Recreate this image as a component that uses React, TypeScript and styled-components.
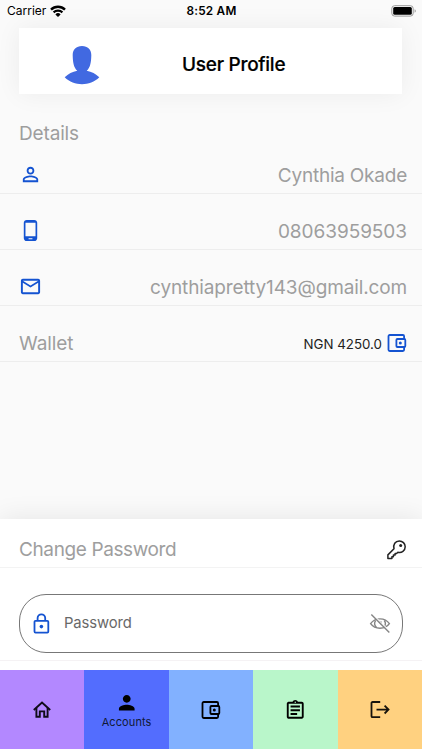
import React from "react";
import styled, { createGlobalStyle } from "styled-components";
import {
  MdPersonOutline,
  MdPhoneAndroid,
  MdMailOutline,
  MdOutlineAssignment,
  MdPerson,
} from "react-icons/md";

const GlobalStyle = createGlobalStyle`
  * { box-sizing: border-box; }
  body { margin: 0; background: #fafafa; }
  svg { display: block; flex: none; }
`;

const Screen = styled.div`
  width: 422px;
  height: 750px;
  display: flex;
  flex-direction: column;
  overflow: hidden;
  background: #fafafa;
  font-family: Inter, "Liberation Sans", sans-serif;
  color: #000;
`;

const StatusBar = styled.header`
  display: grid;
  grid-template-columns: 1fr auto 1fr;
  align-items: center;
  height: 28px;
  flex: none;
  padding: 0 6px 6px 7px;
  font-size: 12px;
  line-height: 16px;
`;

const Carrier = styled.div`
  display: flex;
  align-items: center;
  gap: 4px;
  letter-spacing: 0;
`;

const Clock = styled.div`
  font-weight: 600;
  font-size: 11.8px;
  letter-spacing: 0.22px;
`;

const Battery = styled.div`
  justify-self: end;
`;

const ProfileCard = styled.section`
  display: grid;
  grid-template-columns: 125px 1fr;
  align-items: center;
  width: 383px;
  height: 66px;
  flex: none;
  margin-left: 19px;
  background: #fff;
  box-shadow: 0 0 26px rgba(0, 0, 0, 0.06);
`;

const Avatar = styled.div`
  display: flex;
  justify-content: center;
  padding-top: 8px;
`;

const Title = styled.h1`
  margin: 7px 0 0 38px;
  font-size: 19px;
  line-height: 24px;
  font-weight: 500;
  letter-spacing: -0.27px;
  -webkit-text-stroke: 0.2px #000;
`;

const Label = styled.span<{ $track: number }>`
  font-size: 19px;
  line-height: 24px;
  letter-spacing: ${(p) => p.$track}px;
  color: #9e9e9e;
  white-space: nowrap;
`;

const SectionTitle = styled.div`
  height: 62px;
  flex: none;
  padding: 28px 0 0 19px;
`;

const Row = styled.div<{ $height: number }>`
  display: flex;
  align-items: flex-end;
  justify-content: space-between;
  flex: none;
  height: ${(p) => p.$height}px;
  padding: 0 15px 5px 19px;
  border-bottom: 1px solid #ededed;
`;

const BlueIcon = styled.span`
  display: flex;
  align-items: center;
  height: 24px;
  padding-bottom: 3px;
  color: #1453d1;
`;

const Balance = styled.div`
  display: flex;
  align-items: center;
  gap: 4px;
  height: 24px;
  margin-right: -1px;
  font-size: 13.3px;
  letter-spacing: 0;
  color: #222;
`;

const Amount = styled.span`
  padding-bottom: 1px;
`;

const Panel = styled.section`
  margin-top: auto;
  flex: none;
  height: 151px;
  background: #fff;
  box-shadow: 0 0 26px rgba(0, 0, 0, 0.09);
`;

const PanelHeader = styled.div`
  display: flex;
  align-items: center;
  justify-content: space-between;
  height: 49px;
  padding: 13px 15px 0 19px;
  border-bottom: 1px solid #f3f3f3;
`;

const PasswordArea = styled.div`
  height: 93px;
  padding: 26px 19px 0;
  border-bottom: 1px solid #f5f2f4;
`;

const PasswordField = styled.div`
  display: flex;
  align-items: center;
  height: 59px;
  padding: 0 11px 0 12px;
  border: 1px solid #777;
  border-radius: 27px;
`;

const Placeholder = styled.span`
  flex: 1;
  margin-left: 12px;
  padding-bottom: 2px;
  font-size: 14.8px;
  letter-spacing: -0.1px;
  color: #686868;
`;

const TabBar = styled.nav`
  display: grid;
  grid-template-columns: repeat(5, 1fr);
  flex: none;
  height: 80px;
  padding-bottom: 1px;
  background: #fff;
`;

const Tab = styled.div<{ $color: string }>`
  display: flex;
  flex-direction: column;
  align-items: center;
  justify-content: center;
  padding-top: 1px;
  background: ${(p) => p.$color};
`;

const TabLabel = styled.span`
  font-size: 11px;
  line-height: 14px;
  letter-spacing: 0.1px;
  color: #101936;
`;

const WifiIcon = () => (
  <svg width="16" height="13" viewBox="0 0 16 13">
    <path d="M1 4.6a10 10 0 0 1 14 0" fill="none" stroke="#000" strokeWidth="2.4" />
    <path d="M3.6 7.4a6.3 6.3 0 0 1 8.8 0" fill="none" stroke="#000" strokeWidth="2.2" />
    <path d="M8 12 5.4 9.4a3.7 3.7 0 0 1 5.2 0Z" />
  </svg>
);

const BatteryIcon = () => (
  <svg width="26" height="12" viewBox="0 0 26 12">
    <rect x="1.8" y="0.7" width="21.4" height="10.4" rx="2.8" fill="none" stroke="#999" strokeWidth="1" />
    <rect x="3.2" y="2.1" width="18.6" height="7.6" rx="1.5" />
    <path d="M24.6 4.3v3.4q1.2-.5 1.2-1.7t-1.2-1.7Z" fill="#999" />
  </svg>
);

const AvatarIcon = () => (
  <svg width="36" height="39" viewBox="0 0 36 39" fill="#4169e1">
    <path d="M18 0C24 0 27.5 3.7 27.3 9.5C27.1 16.2 26.5 21.3 22.7 24.8C27.7 25.8 31.7 27.9 35.3 31.2C26 40.5 10 40.5.7 31.2C4.3 27.9 8.3 25.8 13.3 24.8C9.5 21.3 8.9 16.2 8.7 9.5C8.5 3.7 12 0 18 0Z" />
  </svg>
);

const WalletIcon = () => (
  <svg width="22" height="22" viewBox="0 0 22 22" fill="none" stroke="currentColor" strokeWidth="1.8">
    <path d="M18.1 7V4.2a1.2 1.2 0 0 0-1.2-1.2H3.7A1.2 1.2 0 0 0 2.5 4.2v13.6A1.2 1.2 0 0 0 3.7 19h13.2a1.2 1.2 0 0 0 1.2-1.2V15" />
    <rect x="10.4" y="7" width="8.9" height="8" rx="1" />
    <circle cx="14.3" cy="11" r="1.5" fill="currentColor" stroke="none" />
  </svg>
);

const KeyIcon = () => (
  <svg width="20" height="20" viewBox="0 0 20 20" fill="none" stroke="#222" strokeWidth="1.5" strokeLinejoin="round">
    <path d="M7 8.8C5.9 4.5 8.3.9 12.3.9A5.9 5.9 0 0 1 18.2 6.8c0 4-3.6 6.3-7.3 5.4l-1.3 1.3H8.1v1.6H6.4v1.7H4.9v1.6H.9v-3.5Z" />
    <circle cx="13.7" cy="5.4" r="1.5" fill="#222" stroke="none" />
  </svg>
);

const LockIcon = () => (
  <svg width="20" height="24" viewBox="0 0 20 24" fill="none" stroke="#1453d1" strokeWidth="1.8">
    <rect x="2.5" y="8.8" width="13.8" height="11.8" rx="1" />
    <path d="M5.6 8.5V6.1a3.8 3.8 0 0 1 7.6 0v2.4" />
    <circle cx="9.4" cy="14.6" r="1.8" fill="#1453d1" stroke="none" />
  </svg>
);

const EyeSlashIcon = () => (
  <svg width="22" height="22" viewBox="0 0 22 22" fill="none" stroke="#858585" strokeWidth="1.4">
    <path d="M1.6 10.7C6 4.2 16 4.2 20.4 10.7C16 16.8 6 16.8 1.6 10.7Z" />
    <path d="M6.6 7.6C5.2 9.6 5.5 12.4 7.5 14.5M15.3 7.5C16.8 9.5 16.6 12.1 14.9 14.3" />
    <path d="M9 8.2c1.4-1.2 4-.4 4 1.6 0 .9-.4 1.5-1 2Z" fill="#858585" stroke="none" />
    <path d="M3.4 1.2 20.9 18.5" stroke="#fff" strokeWidth="1.1" />
    <path d="M2.3 1.6 20.3 19.6" strokeWidth="1.4" />
  </svg>
);

const HomeIcon = () => (
  <svg width="20" height="20" viewBox="0 0 20 20" fill="none" stroke="#100c18" strokeWidth="1.9">
    <path d="M1.8 10 10 2.5l8.2 7.5" />
    <path d="M4.4 8v8.8h3.4v-5.4h4.4v5.4h3.4V8" />
  </svg>
);

const LogoutIcon = () => (
  <svg width="20" height="20" viewBox="0 0 20 20" fill="none" stroke="#17130c" strokeWidth="1.8">
    <path d="M10.2 2H2.5a1 1 0 0 0-1 1v13.2a1 1 0 0 0 1 1h7.7M6.5 9.6h12M14.6 5.7l3.9 3.9-3.9 3.9" />
  </svg>
);

const tabs = [
  { name: "home", color: "#b388ff", icon: <HomeIcon /> },
  { name: "accounts", color: "#536dfe", icon: <MdPerson size={23.5} />, label: "Accounts" },
  { name: "wallet", color: "#82b1ff", icon: <WalletIcon /> },
  { name: "history", color: "#b9f6ca", icon: <MdOutlineAssignment size={22.5} /> },
  { name: "logout", color: "#ffd180", icon: <LogoutIcon /> },
];

export default function App() {
  return (
    <>
      <GlobalStyle />
      <Screen>
        <StatusBar>
          <Carrier>Carrier<WifiIcon /></Carrier>
          <Clock>8:52 AM</Clock>
          <Battery><BatteryIcon /></Battery>
        </StatusBar>
        <ProfileCard>
          <Avatar><AvatarIcon /></Avatar>
          <Title>User Profile</Title>
        </ProfileCard>
        <SectionTitle><Label $track={-0.15}>Details</Label></SectionTitle>
        <Row $height={38}>
          <BlueIcon><MdPersonOutline size={23} /></BlueIcon>
          <Label $track={-0.23}>Cynthia Okade</Label>
        </Row>
        <Row $height={56}>
          <BlueIcon><MdPhoneAndroid size={23} /></BlueIcon>
          <Label $track={-0.05}>08063959503</Label>
        </Row>
        <Row $height={56}>
          <BlueIcon><MdMailOutline size={23} /></BlueIcon>
          <Label $track={-0.13}>cynthiapretty143@gmail.com</Label>
        </Row>
        <Row $height={56}>
          <Label $track={-0.1}>Wallet</Label>
          <Balance>
            <Amount>NGN 4250.0</Amount>
            <BlueIcon><WalletIcon /></BlueIcon>
          </Balance>
        </Row>
        <Panel>
          <PanelHeader>
            <Label $track={-0.38}>Change Password</Label>
            <KeyIcon />
          </PanelHeader>
          <PasswordArea>
            <PasswordField>
              <LockIcon />
              <Placeholder>Password</Placeholder>
              <EyeSlashIcon />
            </PasswordField>
          </PasswordArea>
        </Panel>
        <TabBar>
          {tabs.map((tab) => (
            <Tab key={tab.name} $color={tab.color}>
              {tab.icon}
              {tab.label && <TabLabel>{tab.label}</TabLabel>}
            </Tab>
          ))}
        </TabBar>
      </Screen>
    </>
  );
}
